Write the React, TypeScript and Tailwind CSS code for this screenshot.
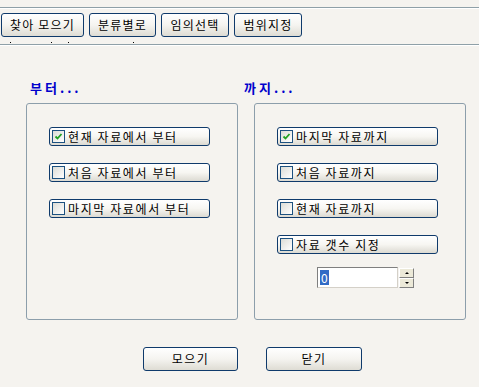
import React from "react";

const font = { fontFamily: '"Noto Sans CJK KR", "Noto Sans", sans-serif' };

function Check() {
  return (
    <svg width="9" height="9" viewBox="0 0 9 9">
      <path d="M1.5 4.5 L3.5 6.5 L7.5 2" stroke="#21a121" strokeWidth="1.8" fill="none" />
    </svg>
  );
}

function CheckBtn({ label, checked }: { label: string; checked?: boolean }) {
  return (
    <div className="w-[161px] h-[19px] rounded-[3px] border border-[#0f3a6b] bg-gradient-to-b from-[#ffffff] via-[#f7f6f2] to-[#dcdad2] flex items-center pl-[2px]">
      <div className="w-[13px] h-[13px] border border-[#1c5180] bg-gradient-to-br from-[#dcdcd6] to-[#ffffff] flex items-center justify-center shrink-0">
        {checked && <Check />}
      </div>
      <span className="ml-[3px] text-[12px] leading-none text-black tracking-[1.6px] whitespace-pre">{label}</span>
    </div>
  );
}

function TopBtn({ label, w }: { label: string; w: string }) {
  return (
    <div className={`${w} h-[24px] rounded-[3px] border border-[#0f3a6b] bg-gradient-to-b from-[#ffffff] via-[#f5f4f0] to-[#dedcd4] flex items-center justify-center text-[12px] text-black tracking-[1.2px] whitespace-pre`}>
      {label}
    </div>
  );
}

export default function App() {
  return (
    <div className="w-[479px] h-[387px] bg-[#f5f3ef] overflow-hidden flex flex-col" style={font}>
      <div className="h-[7px]" />
      <div className="h-[1px] bg-[#8fa0a8]" />
      <div className="h-[1px] bg-[#ffffff]" />
      <div className="flex gap-[5px] pl-[1px] mt-[4px]">
        <TopBtn label="찾아 모으기" w="w-[83px]" />
        <TopBtn label="분류별로" w="w-[67px]" />
        <TopBtn label="임의선택" w="w-[68px]" />
        <TopBtn label="범위지정" w="w-[68px]" />
      </div>
      <div className="h-[6px] relative">
        <div className="absolute left-[10px] bottom-0 w-[1px] h-[1px] bg-black" />
        <div className="absolute left-[51px] bottom-0 w-[1px] h-[1px] bg-black" />
        <div className="absolute left-[68px] bottom-0 w-[1px] h-[1px] bg-black" />
        <div className="absolute left-[133px] bottom-0 w-[1px] h-[1px] bg-black" />
      </div>
      <div className="h-[1px]" />
      <div className="h-[1px] bg-[#8fa0a8]" />
      <div className="h-[1px] bg-[#ffffff]" />
      <div className="flex mt-[34px]">
        <div className="flex flex-col ml-[26px] w-[212px]">
          <div className="ml-[4px] h-[16px] text-[13px] leading-[16px] font-bold text-[#0000cc] tracking-[3px] whitespace-pre">부터...</div>
          <div className="mt-[7px] h-[217px] border border-[#8c9eab] rounded-[3px] flex flex-col pl-[22px] pt-[23px] gap-[17px]">
            <CheckBtn label="현재 자료에서 부터" checked />
            <CheckBtn label="처음 자료에서 부터" />
            <CheckBtn label="마지막 자료에서 부터" />
          </div>
        </div>
        <div className="flex flex-col ml-[6px] w-[222px]">
          <div className="h-[16px] text-[13px] leading-[16px] font-bold text-[#0000cc] tracking-[3px] whitespace-pre">까지...</div>
          <div className="mt-[7px] ml-[10px] w-[212px] h-[217px] border border-[#8c9eab] rounded-[3px] flex flex-col pl-[22px] pt-[23px]">
            <div className="flex flex-col gap-[17px]">
              <CheckBtn label="마지막 자료까지" checked />
              <CheckBtn label="처음 자료까지" />
              <CheckBtn label="현재 자료까지" />
              <CheckBtn label="자료 갯수 지정" />
            </div>
            <div className="flex ml-[40px] mt-[13px] items-center">
              <div className="w-[81px] h-[21px] border border-[#7f7f7f] border-r-[#d4d0c8] border-b-[#d4d0c8] bg-white flex items-center pl-[2px]">
                <span className="bg-[#316ac5] text-white text-[12px] leading-[15px] px-[1px]">0</span>
              </div>
              <div className="flex flex-col ml-[1px]">
                <div className="w-[15px] h-[10px] bg-[#ece9d8] border border-[#ffffff] border-r-[#808080] border-b-[#808080] flex items-center justify-center">
                  <div className="w-0 h-0 border-l-[2px] border-r-[2px] border-b-[2px] border-l-transparent border-r-transparent border-b-black" />
                </div>
                <div className="w-[15px] h-[10px] bg-[#ece9d8] border border-[#ffffff] border-r-[#808080] border-b-[#808080] flex items-center justify-center">
                  <div className="w-0 h-0 border-l-[2px] border-r-[2px] border-t-[2px] border-l-transparent border-r-transparent border-t-black" />
                </div>
              </div>
            </div>
          </div>
        </div>
      </div>
      <div className="flex mt-[27px] pl-[143px] gap-[28px]">
        <div className="w-[95px] h-[24px] rounded-[3px] border border-[#0f3a6b] bg-gradient-to-b from-[#ffffff] via-[#f5f4f0] to-[#dedcd4] flex items-center justify-center text-[12px] tracking-[1.5px]">모으기</div>
        <div className="w-[96px] h-[24px] rounded-[3px] border border-[#0f3a6b] bg-gradient-to-b from-[#ffffff] via-[#f5f4f0] to-[#dedcd4] flex items-center justify-center text-[12px] tracking-[1.5px]">닫기</div>
      </div>
    </div>
  );
}
